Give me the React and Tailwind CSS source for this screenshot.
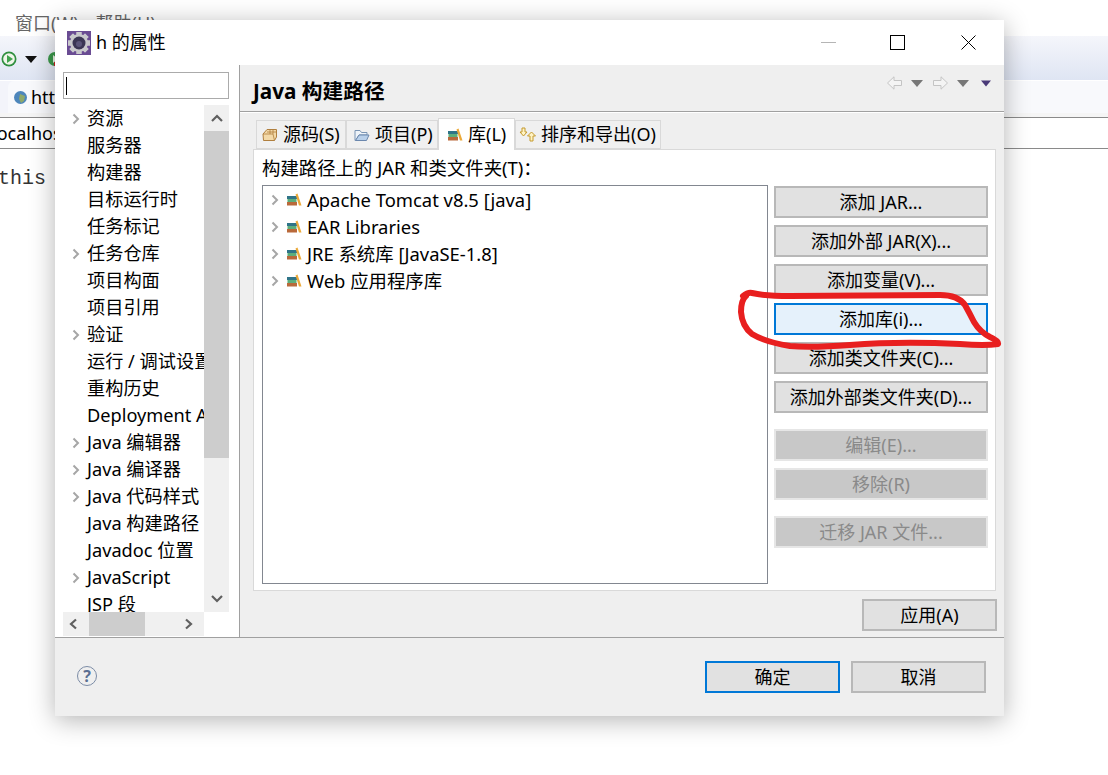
const FONT = "font-['Noto_Sans','Noto_Sans_CJK_SC',sans-serif]";

const treeItems = [
  ['资源', true],
  ['服务器', false],
  ['构建器', false],
  ['目标运行时', false],
  ['任务标记', false],
  ['任务仓库', true],
  ['项目构面', false],
  ['项目引用', false],
  ['验证', true],
  ['运行 / 调试设置', false],
  ['重构历史', false],
  ['Deployment Assembly', false],
  ['Java 编辑器', true],
  ['Java 编译器', true],
  ['Java 代码样式', true],
  ['Java 构建路径', false],
  ['Javadoc 位置', false],
  ['JavaScript', true],
  ['JSP 段', false],
];

const libs = ['Apache Tomcat v8.5 [java]', 'EAR Libraries', 'JRE 系统库 [JavaSE-1.8]', 'Web 应用程序库'];

function Chevron({ className = '' }) {
  return (
    <svg width="8" height="12" viewBox="0 0 8 12" className={className}>
      <path d="M1.5 1.5 L6 6 L1.5 10.5" fill="none" stroke="#a6a6a6" strokeWidth="2" />
    </svg>
  );
}

function Books({ className = '' }) {
  return (
    <svg width="16" height="13" viewBox="0 0 16 13" className={`shrink-0 ${className}`}>
      <rect x="1" y="9" width="10" height="3.5" fill="#b9693a" />
      <rect x="1.5" y="6" width="9" height="3" fill="#5cae7c" />
      <rect x="1" y="3" width="10" height="3" fill="#2f7488" />
      <path d="M9.5 1.5 L11.5 0.5 L15.5 12.5 L13 12.5 Z" fill="#eba93a" />
    </svg>
  );
}

function Arrow({ dir }) {
  const d = dir === 'left' ? 'M0.5 7 L7 0.8 V4.5 H14.5 V9.5 H7 V13.2 Z' : 'M14.5 7 L8 0.8 V4.5 H0.5 V9.5 H8 V13.2 Z';
  return (
    <svg width="15" height="14" viewBox="0 0 15 14">
      <path d={d} fill="#f4f4f4" stroke="#c4c4c4" />
    </svg>
  );
}

function Caret({ color = '#777', className = '' }) {
  return (
    <svg width="12" height="7" viewBox="0 0 12 7" className={className}>
      <path d="M0 0 H12 L6 7 Z" fill={color} />
    </svg>
  );
}

function GearLogo() {
  const teeth = [0, 45, 90, 135, 180, 225, 270, 315];
  return (
    <svg width="24" height="24" viewBox="0 0 24 24">
      <rect width="24" height="24" fill="#6a4c93" />
      {teeth.map(a => (
        <rect key={a} x="9.5" y="1" width="5" height="22" fill="#c9c9cc" transform={`rotate(${a} 12 12)`} />
      ))}
      <circle cx="12" cy="12" r="9" fill="#c9c9cc" />
      <circle cx="12" cy="12" r="6.5" fill="#3b3654" />
      <circle cx="12" cy="13" r="3" fill="#5a5478" />
    </svg>
  );
}

function DesktopBackground() {
  return (
    <div className="flex h-[775px] w-full flex-col overflow-hidden bg-white">
      <div className="flex h-9 items-end gap-[17px] pl-[15px] text-[18px] leading-[26px] text-[#666]">
        <span>窗口(W)</span>
        <span>帮助(H)</span>
      </div>
      <div className="flex h-11 items-center bg-gradient-to-b from-[#f5f6fb] to-[#dfe5f3] pl-[1px] pt-[2px]">
        <svg width="16" height="16" viewBox="0 0 16 16">
          <circle cx="8" cy="8" r="7.5" fill="#2f8f3f" />
          <circle cx="8" cy="8" r="5.8" fill="#f0f5ea" />
          <path d="M6 4 L12 8 L6 12 Z" fill="#3fa34d" />
        </svg>
        <Caret color="#111" className="ml-2" />
        <svg width="16" height="16" viewBox="0 0 16 16" className="ml-[10px]">
          <circle cx="8" cy="8" r="7" fill="#3c9a4c" />
          <path d="M6 4 L11 8 L6 12 Z" fill="#f0f5ea" />
          <rect x="7" y="11" width="5" height="4" fill="#c22" />
        </svg>
      </div>
      <div className="mt-px flex h-8 bg-[#f3f4fa] pl-2">
        <div className="flex flex-1 items-center rounded-tl-md bg-[#f8f9fc] pl-[6px] text-[18px]">
          <svg width="13" height="13" viewBox="0 0 13 13" className="mr-1 shrink-0">
            <circle cx="6.5" cy="6.5" r="6.5" fill="#4d86bb" />
            <path d="M6 3 L11 5 L10 10 L7 12 L5 8 Z" fill="#8fa96a" />
          </svg>
          <span>htt</span>
        </div>
      </div>
      <div className="h-1 bg-[#f5f5f5]" />
      <div className="h-8 border-y border-[#8a8a8a] text-[18px] leading-[30px]">
        <span className="ml-[-8px]">localhost</span>
      </div>
      <div className="ml-[-2px] mt-[18px] font-['Liberation_Mono',monospace] text-[20px] leading-6 text-[#333]">this</div>
    </div>
  );
}

function SideButton({ children, state = 'normal', className = '' }) {
  const look = {
    normal: 'border-[#b8b8b8] bg-[#e1e1e1] text-black',
    hot: 'border-[#0078d7] bg-[#e5f1fb] text-black',
    off: 'border-[#e6e6e6] bg-[#c8c8c8] text-[#8a8a8a]',
  }[state];
  return (
    <div className={`flex h-8 w-[214px] items-center justify-center border-2 pt-px text-[18px] ${look} ${className}`}>
      {children}
    </div>
  );
}

function Tab({ icon, label, active, className = '' }) {
  return (
    <div
      className={`flex items-center gap-[5px] border border-[#d9d9d9] text-[18px] ${
        active ? 'z-10 -mb-px h-[32px] border-b-0 bg-white' : 'h-[29px] bg-[#f0f0f0]'
      } ${className}`}
    >
      {icon}
      <span>{label}</span>
    </div>
  );
}

function Dialog() {
  return (
    <div className="absolute left-[55px] top-[20px] flex h-[696px] w-[949px] flex-col bg-white shadow-[0_4px_24px_rgba(0,0,0,0.3)]">
      {/* title bar */}
      <div className="flex h-[45px] shrink-0 items-center pl-3">
        <GearLogo />
        <span className="ml-[5px] text-[18px]">h 的属性</span>
        <div className="ml-auto flex items-center">
          <div className="mr-[54px] h-px w-[15px] bg-[#b5b5b5]" />
          <div className="mr-[56px] h-[15px] w-[15px] border border-black" />
          <svg width="15" height="15" viewBox="0 0 15 15" className="mr-[28px]">
            <path d="M0.5 0.5 L14.5 14.5 M14.5 0.5 L0.5 14.5" stroke="#000" fill="none" />
          </svg>
        </div>
      </div>

      <div className="flex h-[573px] shrink-0 border-b border-[#a0a0a0]">
        {/* left tree */}
        <div className="w-[185px] shrink-0 border-r border-[#a0a0a0] pl-2">
          <div className="mt-[7px] flex h-[27px] w-[166px] items-center border border-[#ababab] pl-0.5">
            <div className="h-[18px] w-px bg-black" />
          </div>
          <div className="mt-[6px] grid w-[166px] grid-cols-[141px_25px]">
            <div className="h-[507px] overflow-hidden">
              {treeItems.map(([name, arrow]) => (
                <div key={name} className="flex h-[27px] items-center whitespace-nowrap text-[18.2px]">
                  <span className="flex w-6 shrink-0 justify-center pl-[3px] pr-px">{arrow && <Chevron />}</span>
                  <span>{name}</span>
                </div>
              ))}
            </div>
            <div className="flex h-[507px] flex-col bg-[#f0f0f0]">
              <div className="flex h-[26px] items-center justify-center">
                <svg width="12" height="8" viewBox="0 0 12 8">
                  <path d="M1 7 L6 2 L11 7" fill="none" stroke="#606060" strokeWidth="2.2" />
                </svg>
              </div>
              <div className="h-[327px] bg-[#cdcdcd]" />
              <div className="flex-1" />
              <div className="flex h-[26px] items-center justify-center">
                <svg width="12" height="8" viewBox="0 0 12 8">
                  <path d="M1 1 L6 6 L11 1" fill="none" stroke="#606060" strokeWidth="2.2" />
                </svg>
              </div>
            </div>
            <div className="flex h-[24px] items-center bg-[#f0f0f0]">
              <svg width="26" height="12" viewBox="0 0 26 12" className="shrink-0">
                <path d="M13 1.5 L8 6 L13 10.5" fill="none" stroke="#606060" strokeWidth="2.2" />
              </svg>
              <div className="h-full w-14 bg-[#cdcdcd]" />
              <svg width="59" height="12" viewBox="0 0 59 12" className="shrink-0">
                <path d="M41 1.5 L46 6 L41 10.5" fill="none" stroke="#606060" strokeWidth="2.2" />
              </svg>
            </div>
          </div>
        </div>

        {/* right page */}
        <div className="flex flex-1 flex-col bg-[#efefef]">
          <div className="flex h-[47px] shrink-0 border-b border-[#a0a0a0] pl-[13px]">
            <span className="mt-[11px] text-[20.7px] font-bold leading-[30px]">Java 构建路径</span>
            <div className="ml-auto mr-[13px] mt-[11px] flex h-[14px] items-center">
              <Arrow dir="left" />
              <Caret className="ml-[9px]" />
              <span className="ml-[10px]">
                <Arrow dir="right" />
              </span>
              <Caret className="ml-[9px]" />
              <Caret color="#4a3a78" className="ml-3 w-[10px]" />
            </div>
          </div>
          <div className="h-px shrink-0 bg-white" />

          <div className="flex h-[479px] shrink-0 flex-col pl-[13px] pr-2">
            <div className="mt-[7px] flex h-[29px] items-end pl-[3px]">
              <Tab
                label="源码(S)"
                className="w-[90px] pl-[5px]"
                icon={
                  <svg width="16" height="14" viewBox="0 0 16 14">
                    <path d="M1 6 L5 1.5 H14.5 V9 L12.5 12.5 H1.5 Z" fill="#f3d9a8" stroke="#b07f3e" />
                    <path d="M1 6 H11 L12.5 12.5 M8 1.5 V6 M11 1.5 V6 M5 4 H14.5" fill="none" stroke="#b07f3e" strokeWidth="0.8" />
                  </svg>
                }
              />
              <Tab
                label="项目(P)"
                className="w-[92px] pl-[7px]"
                icon={
                  <svg width="16" height="14" viewBox="0 0 16 14">
                    <path d="M1 12.5 V2.5 H6 L7.5 4.5 H13 V7 H5 L1.5 12.5 Z" fill="#eef3f8" stroke="#7b95b4" />
                    <path d="M1.5 12.5 L5 7 H15 L12.5 12.5 Z" fill="#b9d0ea" stroke="#6b87ad" />
                  </svg>
                }
              />
              <Tab label="库(L)" active className="w-[77px] pl-[8px]" icon={<Books />} />
              <Tab
                label="排序和导出(O)"
                className="w-[146px] pl-[3px]"
                icon={
                  <svg width="17" height="15" viewBox="0 0 17 15">
                    <path d="M3 1 H6 V5 H8 L4.5 9 L1 5 H3 Z" fill="#fff3c4" stroke="#c49a2e" />
                    <path d="M11 14 H14 V9 H16.5 L12.5 5 L8.5 9 H11 Z" fill="#fff3c4" stroke="#c49a2e" />
                  </svg>
                }
              />
            </div>

            <div className="flex h-[442px] flex-col border border-[#d9d9d9] bg-white pl-2">
              <div className="flex h-[35px] shrink-0 items-center text-[18.4px]">构建路径上的 JAR 和类文件夹(T)：</div>
              <div className="flex">
                <div className="h-[399px] w-[506px] border border-[#828790]">
                  {libs.map(name => (
                    <div key={name} className="flex h-[27px] items-center pl-2 text-[18.4px]">
                      <Chevron className="mr-[7px]" />
                      <Books className="mr-[5px]" />
                      <span className="whitespace-nowrap">{name}</span>
                    </div>
                  ))}
                </div>
                <div className="ml-[6px] flex flex-col gap-[7px] pt-px">
                  <SideButton>添加 JAR...</SideButton>
                  <SideButton>添加外部 JAR(X)...</SideButton>
                  <SideButton>添加变量(V)...</SideButton>
                  <SideButton state="hot">添加库(i)...</SideButton>
                  <SideButton>添加类文件夹(C)...</SideButton>
                  <SideButton>添加外部类文件夹(D)...</SideButton>
                  <SideButton state="off" className="mt-[9px]">编辑(E)...</SideButton>
                  <SideButton state="off">移除(R)</SideButton>
                  <SideButton state="off" className="mt-[9px]">迁移 JAR 文件...</SideButton>
                </div>
              </div>
            </div>
          </div>

          <div className="flex flex-1 justify-end pr-[7px] pt-[7px]">
            <div className="flex h-8 w-[135px] items-center justify-center border-2 border-[#b8b8b8] bg-[#e1e1e1] text-[18px]">
              应用(A)
            </div>
          </div>
        </div>
      </div>

      {/* bottom bar */}
      <div className="flex flex-1 items-start bg-[#efefef] pl-[22px] pt-[23px]">
        <div className="mt-[5px] flex h-5 w-5 items-center justify-center rounded-full border-[1.5px] border-[#7c8ca6] text-[16px] font-bold leading-none text-[#5a6f92]">
          ?
        </div>
        <div className="ml-auto mr-[18px] flex gap-[11px]">
          <div className="flex h-8 w-[135px] items-center justify-center border-2 border-[#0078d7] bg-[#e1e1e1] text-[18px]">确定</div>
          <div className="flex h-8 w-[135px] items-center justify-center border-2 border-[#b8b8b8] bg-[#e1e1e1] text-[18px]">取消</div>
        </div>
      </div>
    </div>
  );
}

export default function App() {
  return (
    <div className={`relative h-[775px] w-full overflow-hidden text-black ${FONT}`}>
      <DesktopBackground />
      <Dialog />
      {/* red marker scribble */}
      <svg width="1108" height="775" viewBox="0 0 1108 775" className="pointer-events-none absolute left-0 top-0">
        <path
          d="M743 296 Q748 292 752 293 Q765 296 790 296 L940 295 Q958 295 965 305 Q970 314 974 322 Q980 332 990 337 Q999 341 998 344 Q985 346 960 344 Q900 341 850 345 Q810 348 790 346 Q765 342 752 334 Q742 326 741 312 Q741 300 746 296"
          fill="none"
          stroke="#e81f1f"
          strokeWidth="6"
          strokeLinecap="round"
          strokeLinejoin="round"
        />
      </svg>
    </div>
  );
}
